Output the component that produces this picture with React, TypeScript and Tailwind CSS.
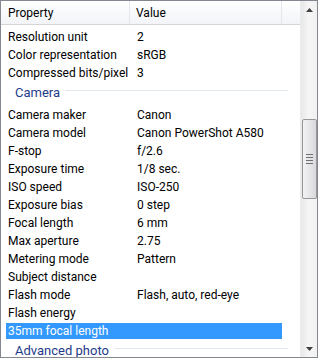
import React from "react";

type Row = { k: string; v?: string; group?: boolean; sel?: boolean };

const rows: Row[] = [
  { k: "Resolution unit", v: "2" },
  { k: "Color representation", v: "sRGB" },
  { k: "Compressed bits/pixel", v: "3" },
  { k: "Camera", group: true },
  { k: "Camera maker", v: "Canon" },
  { k: "Camera model", v: "Canon PowerShot A580" },
  { k: "F-stop", v: "f/2.6" },
  { k: "Exposure time", v: "1/8 sec." },
  { k: "ISO speed", v: "ISO-250" },
  { k: "Exposure bias", v: "0 step" },
  { k: "Focal length", v: "6 mm" },
  { k: "Max aperture", v: "2.75" },
  { k: "Metering mode", v: "Pattern" },
  { k: "Subject distance", v: "" },
  { k: "Flash mode", v: "Flash, auto, red-eye" },
  { k: "Flash energy", v: "" },
  { k: "35mm focal length", v: "", sel: true },
  { k: "Advanced photo", group: true },
];

export default function App() {
  return (
    <div
      className="w-[318px] h-[358px] overflow-hidden border border-[#828790] bg-white flex text-[12px] text-black"
      style={{ fontFamily: "Roboto, 'Liberation Sans', sans-serif" }}
    >
      <div className="w-[299px] flex flex-col shrink-0">
        <div className="h-[24px] flex shrink-0 border-b border-[#d5d5d5] bg-gradient-to-b from-white to-[#f2f4f7]">
          <div className="w-[129px] pl-[7px] flex items-center border-r border-[#e3e8ee]">Property</div>
          <div className="w-[152px] pl-[6px] flex items-center border-r border-[#e3e8ee]">Value</div>
          <div className="flex-1" />
        </div>
        <div className="pt-[2.5px] flex flex-col">
          {rows.map((r, i) =>
            r.group ? (
              <div key={i} className="h-[24px] ml-[5px] w-[282px] flex items-start shrink-0">
                <span className="mt-[4px] pl-[9px] pr-[5px] text-[13px] leading-[13px] text-[#1e3b8a] whitespace-nowrap">
                  {r.k}
                </span>
                <div className="flex-1 mt-[8px] h-px bg-[#e2e8f0]" />
              </div>
            ) : (
              <div key={i} className="h-[18px] ml-[5px] w-[276px] flex items-center shrink-0">
                <div
                  className={
                    "h-[16px] w-full flex items-center " +
                    (r.sel ? "bg-[#3399ff] text-white" : "")
                  }
                >
                  <div className="w-[124px] pl-[2px] whitespace-nowrap">{r.k}</div>
                  <div className="pl-[7px] whitespace-nowrap">{r.v}</div>
                </div>
              </div>
            )
          )}
        </div>
      </div>
      <div className="w-[17px] shrink-0 flex flex-col bg-gradient-to-r from-[#e8e8e8] via-[#f6f6f6] to-[#f0f0f0] border-l border-[#ececec]">
        <div className="h-[17px] flex items-center justify-center shrink-0">
          <svg width="7" height="4" viewBox="0 0 7 4">
            <path d="M0 4 L3.5 0 L7 4 Z" fill="#404040" />
          </svg>
        </div>
        <div className="h-[101px] shrink-0" />
        <div className="h-[80px] mx-[0.5px] shrink-0 rounded-[2px] border border-[#979797] bg-gradient-to-r from-[#f3f3f3] to-[#d9d9de] flex flex-col items-center justify-center gap-[2px]">
          <div className="w-[7px] h-px bg-[#6f6f6f]" />
          <div className="w-[7px] h-px bg-[#6f6f6f]" />
          <div className="w-[7px] h-px bg-[#6f6f6f]" />
          <div className="w-[7px] h-px bg-[#6f6f6f]" />
        </div>
        <div className="flex-1" />
        <div className="h-[17px] flex items-center justify-center shrink-0">
          <svg width="7" height="4" viewBox="0 0 7 4">
            <path d="M0 0 L3.5 4 L7 0 Z" fill="#404040" />
          </svg>
        </div>
      </div>
    </div>
  );
}
